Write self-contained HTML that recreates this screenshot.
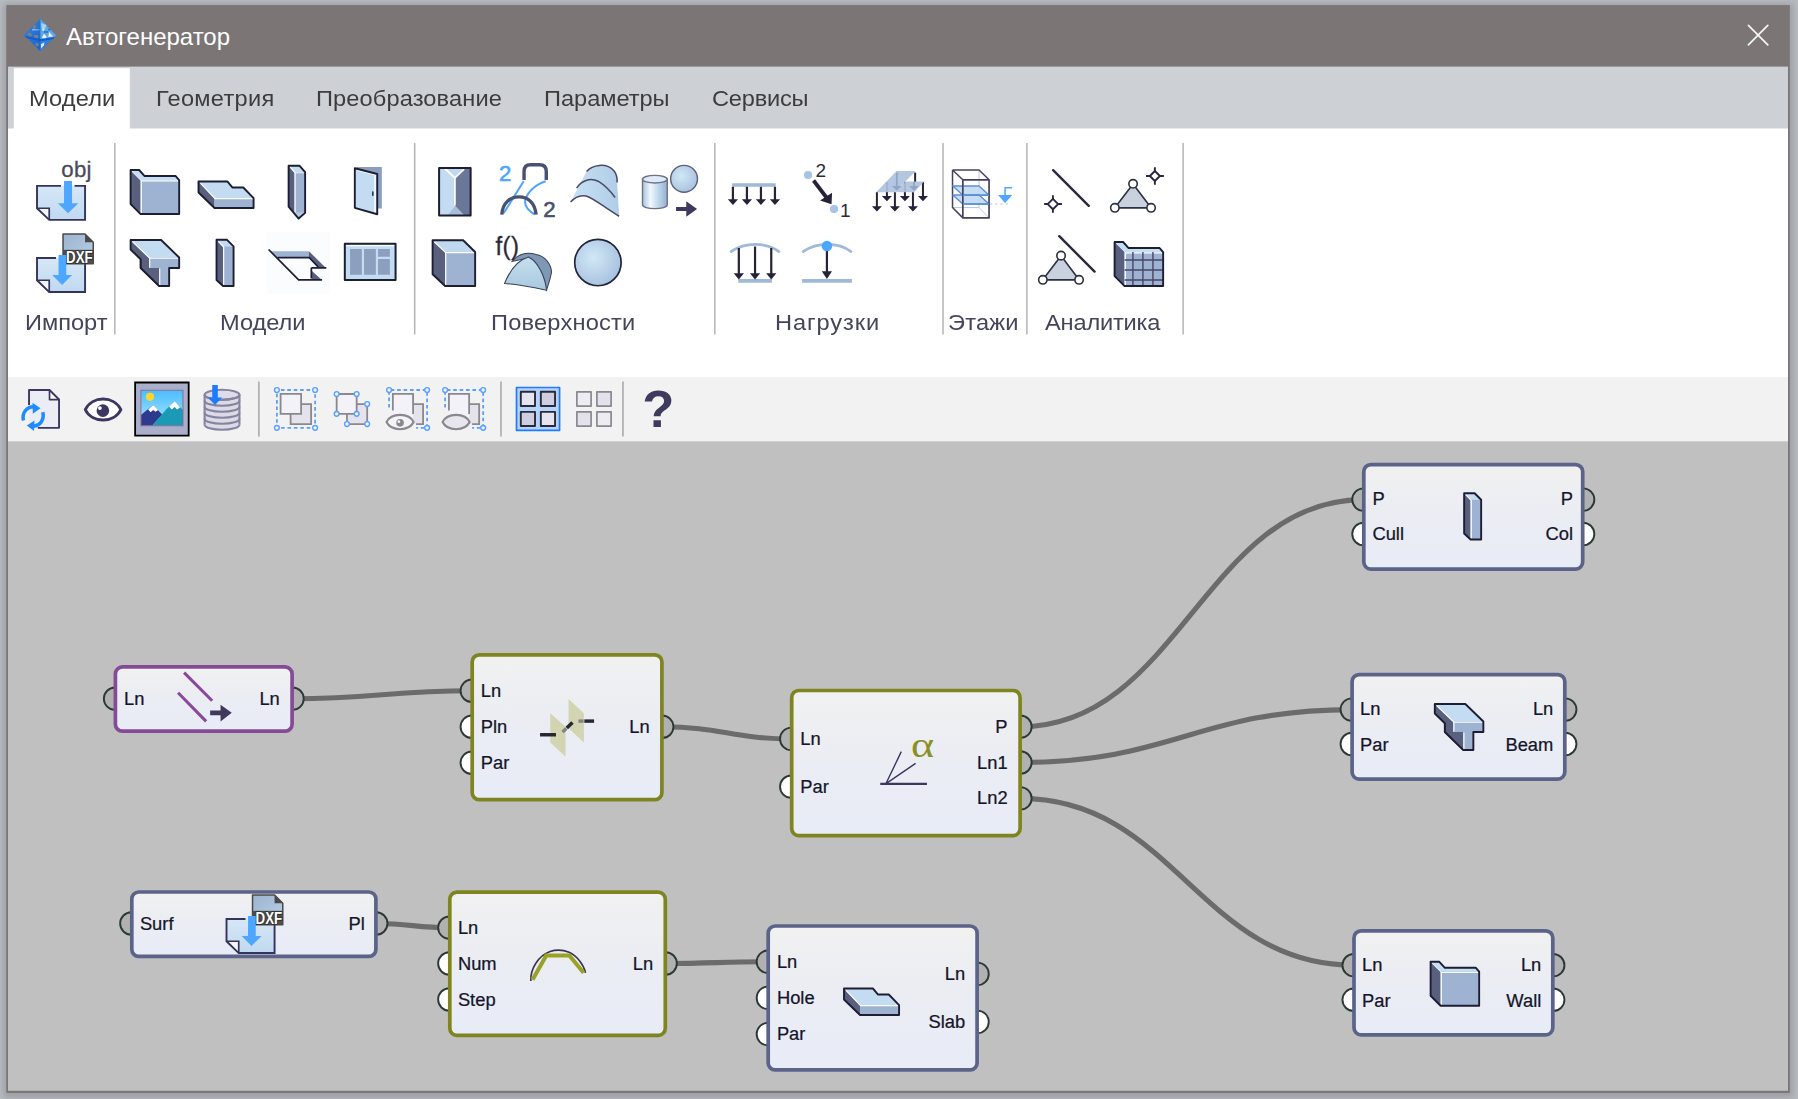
<!DOCTYPE html>
<html lang="ru">
<head>
<meta charset="utf-8">
<title>Автогенератор</title>
<style>
*{box-sizing:border-box;margin:0;padding:0}
html,body{width:1798px;height:1099px;overflow:hidden}
body{background:#b8bbc0;font-family:"Liberation Sans",sans-serif;position:relative}
.win,.title,.tabs,.ribbon,.toolbar,.canvas{position:absolute;left:0;top:0;width:1798px;height:1099px}
svg.ov{position:absolute;left:0;top:0;width:1798px;height:1099px;overflow:visible}
.t{position:absolute;white-space:nowrap;line-height:1}
.cap{font-size:24px;color:#fff}
.tab{font-size:22.5px;color:#3c3c3c;transform:scaleX(1.05);transform-origin:0 0}
.glabel{font-size:22.5px;color:#44445a;transform:scaleX(1.05);transform-origin:0 0}
.nl{font-size:18px;color:#1a1a2e}
</style>
</head>
<body>
<div class="win">
  <svg class="ov" viewBox="0 0 1798 1099">
  <defs>
    <filter id="sh" x="-2%" y="-2%" width="104%" height="104%"><feGaussianBlur stdDeviation="3"/></filter>
  </defs>
  <rect x="3.5" y="3.5" width="1789.5" height="1094" fill="#9b9ea4" filter="url(#sh)"/>
  <rect x="6.3" y="5.1" width="1783.5" height="1087.8" fill="#7b7575"/>
  <rect x="8" y="66.6" width="1780" height="63" fill="#cdd0d5"/>
  <rect x="8" y="128.5" width="1780" height="250" fill="#fff"/>
  <rect x="13.8" y="68.2" width="116" height="61" fill="#fff"/>
  <rect x="8" y="377" width="1780" height="65.5" fill="#f2f2f2"/>
  <rect x="8" y="441.3" width="1780" height="649.5" fill="#c0c0c0"/>
  <path d="M1748.4 25.4L1767.8 44.8M1767.8 25.4L1748.4 44.8" stroke="#f6f6f6" stroke-width="1.7" stroke-linecap="round" fill="none"/>
</svg>

  <div class="title">
    <svg class="ov" viewBox="0 0 1798 1099">
<defs><filter id="lb" x="-10%" y="-10%" width="120%" height="120%"><feGaussianBlur stdDeviation="0.55"/></filter>
<linearGradient id="lg1" x1="0" y1="0" x2="1" y2="1"><stop offset="0" stop-color="#3f86d8"/><stop offset="1" stop-color="#0f63d0"/></linearGradient></defs>
<g filter="url(#lb)"><g transform="translate(16 12) scale(0.04367)">
<path d="M560 160L920 530L555 892L190 520Z" fill="#2273d6"/>
<path d="M560 160L555 892L190 520Z" fill="url(#lg1)"/>
<path d="M560 160L920 530L860 590L560 640Z" fill="#5fa6e4"/>
<path d="M575 250L700 300L660 400L590 380Z" fill="#a9d3ea"/>
<path d="M600 380L650 390L640 430L600 425Z" fill="#e4efe6"/>
<path d="M640 500L700 560L690 610L590 600Z" fill="#eef2e6"/>
<path d="M760 450L850 560L740 570Z" fill="#e6efe2"/>
<path d="M640 440H730V475H640Z" fill="#1b6bd4"/>
<path d="M740 380L790 400L770 430L735 415Z" fill="#1b6bd4"/>
<path d="M560 640L860 590L800 650L556 892Z" fill="#2f7fdc"/>
<path d="M570 740L650 690L640 760L575 840Z" fill="#dfe3f6"/>
<path d="M200 545L560 620L880 575L860 620L560 672L250 600Z" fill="#0b60cf"/>
<path d="M370 390L540 400L540 420L370 425Z" fill="#8fbfe6"/>
<path d="M275 470L360 500L350 560L280 530Z" fill="#8a7d76"/>
<path d="M415 525L510 535L510 600L420 590Z" fill="#8a7d76"/>
<path d="M390 310L460 300L450 375L385 390Z" fill="#7a7f92"/>
<path d="M440 700L520 720L510 790L450 770Z" fill="#7a7f92"/>
</g></g>
</svg>

    <div class="t cap" style="left:66px;top:25px">Автогенератор</div>
  </div>
  <div class="tabs">
    <div class="t tab" style="left:28.7px;top:87.9px;letter-spacing:0.11px">Модели</div>
    <div class="t tab" style="left:155.9px;top:87.9px;letter-spacing:0.26px">Геометрия</div>
    <div class="t tab" style="left:315.9px;top:87.9px;letter-spacing:0.10px">Преобразование</div>
    <div class="t tab" style="left:543.7px;top:87.9px;letter-spacing:-0.04px">Параметры</div>
    <div class="t tab" style="left:711.5px;top:87.9px;letter-spacing:-0.21px">Сервисы</div>
  </div>
  <div class="ribbon">
    <div class="t glabel" style="left:24.6px;top:311.6px;letter-spacing:-0.01px">Импорт</div>
    <div class="t glabel" style="left:220.4px;top:311.6px;letter-spacing:-0.06px">Модели</div>
    <div class="t glabel" style="left:490.9px;top:311.6px;letter-spacing:0.19px">Поверхности</div>
    <div class="t glabel" style="left:775.0px;top:311.6px;letter-spacing:0.86px">Нагрузки</div>
    <div class="t glabel" style="left:947.6px;top:311.6px;letter-spacing:0.17px">Этажи</div>
    <div class="t glabel" style="left:1044.7px;top:311.6px;letter-spacing:-0.18px">Аналитика</div>
    <svg class="ov" viewBox="0 0 1798 1099" font-family="Liberation Sans, sans-serif">
<defs>
<linearGradient id="pg" x1="0" y1="0" x2="0" y2="1"><stop offset="0" stop-color="#d6e7f6"/><stop offset="1" stop-color="#c0d9f0"/></linearGradient>
<linearGradient id="shg" x1="0" y1="0" x2="1" y2="0"><stop offset="0" stop-color="#c8e2f3"/><stop offset="1" stop-color="#afcde7"/></linearGradient>
<linearGradient id="cyg" x1="0" y1="0" x2="1" y2="0"><stop offset="0" stop-color="#a9c4de"/><stop offset=".32" stop-color="#f2f8fd"/><stop offset=".6" stop-color="#c5dcf0"/><stop offset="1" stop-color="#94b0cf"/></linearGradient>
<radialGradient id="spg" cx=".4" cy=".4" r=".65"><stop offset="0" stop-color="#d0e8f6"/><stop offset="1" stop-color="#a7c1de"/></radialGradient>
<linearGradient id="dxg" x1="0" y1="0" x2="1" y2="1"><stop offset="0" stop-color="#9db4cf"/><stop offset="1" stop-color="#b9cfe6"/></linearGradient>
<linearGradient id="fng" x1="0" y1="0" x2="0" y2="1"><stop offset="0" stop-color="#c4dff0"/><stop offset="1" stop-color="#a9c8de"/></linearGradient>
</defs>
<g id="seps" stroke="#b4b4b4" stroke-width="1.5">
<path d="M114.8 143V334.5M414.7 143V334.5M714.8 143V334.5M943 143V334.5M1026.9 143V334.5M1183.1 143V334.5"/>
</g>
<g id="g-import"><g transform="translate(20 155) scale(0.1001)">
<path d="M170 308H650V648H292L170 532Z" fill="url(#pg)"/>
<path d="M170 532H292V648Z" fill="#f4f8fc"/>
<path d="M410 308H170V532L292 648H650V308H545" fill="none" stroke="#34345a" stroke-width="19" stroke-linejoin="miter"/>
<path d="M170 532H292V648" fill="none" stroke="#34345a" stroke-width="17"/>
<path d="M440 260H520V482H582L480 582L378 482H440Z" fill="#4da6ff"/>
<text x="412" y="215" font-size="222" letter-spacing="3" fill="#4a4a5c" stroke="#4a4a5c" stroke-width="3">obj</text>
</g>
<g transform="translate(20 228) scale(0.1001)">
<path d="M170 300H650V640H292L170 522Z" fill="url(#pg)"/>
<path d="M170 522H292V640Z" fill="#f4f8fc"/>
<path d="M360 300H170V522L292 640H650V360" fill="none" stroke="#34345a" stroke-width="19"/>
<path d="M170 522H292V640" fill="none" stroke="#34345a" stroke-width="17"/>
<path d="M430 60H650L732 142V355H430Z" fill="url(#dxg)"/>
<path d="M430 218H732V358H430Z" fill="#4f4f4f"/>
<path d="M650 60L732 142H650Z" fill="#4a4a4a"/>
<path d="M430 60H650L732 142V358H430Z" fill="none" stroke="#4a4a4a" stroke-width="15" stroke-linejoin="round"/>
<text x="460" y="349" font-size="162" font-weight="bold" fill="#fff" stroke="#333" stroke-width="22" stroke-linejoin="round" paint-order="stroke" textLength="266" lengthAdjust="spacingAndGlyphs">DXF</text>
<path d="M385 270H462V470H520L420 570L322 470H385Z" fill="#4da6ff"/>
</g>
</g>
<g id="g-models"><g transform="translate(20 155) scale(0.1001)">
<path d="M1105 150L1205 250V590L1105 490Z" fill="#58607e"/>
<path d="M1105 150H1190L1245 210H1555L1590 250H1205Z" fill="#c6def3"/>
<path d="M1205 250H1590V590H1205Z" fill="#9eb2d2"/>
<path d="M1212 585V258H1585" fill="none" stroke="#fff" stroke-width="11"/>
<path d="M1118 165L1210 256" fill="none" stroke="#fff" stroke-width="8" opacity=".9"/>
<path d="M1105 150H1190L1245 210H1555L1590 250V590H1205L1105 490Z" fill="none" stroke="#1d1d33" stroke-width="19" stroke-linejoin="round"/>
</g>
<g transform="translate(180 155) scale(0.1001)">
<path d="M185 265L345 430V530L185 375Z" fill="#58607e"/>
<path d="M185 265H475L525 325H632L735 430H345Z" fill="#c4dcf1"/>
<path d="M345 430H735V530H345Z" fill="#9eb2d2"/>
<path d="M205 283L350 436H728" fill="none" stroke="#fff" stroke-width="11"/>
<path d="M185 265H475L525 325H632L735 430V530H345L185 375Z" fill="none" stroke="#1d1d33" stroke-width="19" stroke-linejoin="round"/>
</g>
<g transform="translate(180 155) scale(0.1001)">
<path d="M1085 108L1145 172V575L1085 515Z" fill="#58607e"/>
<path d="M1085 108H1195L1250 172H1145Z" fill="#c4dcf1"/>
<path d="M1145 172H1250V578H1145Z" fill="#9eb2d2"/>
<path d="M1145 578H1250L1185 635Z" fill="#b5cce6"/>
<path d="M1100 122L1150 178V572" fill="none" stroke="#fff" stroke-width="11"/>
<path d="M1150 178H1245" fill="none" stroke="#fff" stroke-width="9" opacity=".8"/>
<path d="M1085 108H1195L1250 172V578L1185 635L1085 515Z" fill="none" stroke="#1d1d33" stroke-width="19" stroke-linejoin="round"/>
</g>
<g transform="translate(340 155) scale(0.1001)">
<path d="M165 120H418V535H165Z" fill="#8b9ec1"/>
<path d="M148 132L372 190V592L148 528Z" fill="#c4dcf1"/>
<path d="M172 150L350 196V580" fill="none" stroke="#fff" stroke-width="14"/>
<path d="M148 132L372 190V592L148 528Z" fill="none" stroke="#1d1d33" stroke-width="19" stroke-linejoin="round"/>
<ellipse cx="328" cy="386" rx="9" ry="26" fill="#34345a"/>
</g>
<g transform="translate(20 228) scale(0.1001)">
<path d="M1105 120L1290 295V400H1390V580L1205 400V312L1105 215Z" fill="#58607e"/>
<path d="M1105 120H1410L1590 295H1290Z" fill="#c4dcf1"/>
<path d="M1290 295H1590V400H1490V580H1390V400H1290Z" fill="#9eb2d2"/>
<path d="M1125 138L1296 302H1582M1296 302V395M1396 405V575" fill="none" stroke="#fff" stroke-width="11"/>
<path d="M1205 312V400L1390 580" fill="none" stroke="#1d1d33" stroke-width="14"/>
<path d="M1105 120H1410L1590 295V400H1490V580H1390L1205 400V312L1105 215Z" fill="none" stroke="#1d1d33" stroke-width="19" stroke-linejoin="round"/>
</g>
<g transform="translate(180 228) scale(0.1001)">
<path d="M365 118L430 183V580L365 520Z" fill="#58607e"/>
<path d="M365 118H470L535 183H430Z" fill="#c4dcf1"/>
<path d="M430 183H535V580H430Z" fill="#9eb2d2"/>
<path d="M382 134L436 190V574" fill="none" stroke="#fff" stroke-width="12"/>
<path d="M365 118H470L535 183V580H430L365 520Z" fill="none" stroke="#1d1d33" stroke-width="19" stroke-linejoin="round"/>
</g>
<g transform="translate(180 228) scale(0.1001)">
<path d="M865 40H1495V660H865Z" fill="#fbfcfe"/>
<path d="M905 232H1288V292H968Z" fill="#9eb2d2"/>
<path d="M1288 232L1458 400H1385L1288 300Z" fill="#58607e"/>
<path d="M1318 430L1415 518H1318Z" fill="#58607e"/>
<path d="M885 215L1185 518H1420M975 295H1290L1380 388M1312 398H1462M1312 398V505" fill="none" stroke="#1d1d33" stroke-width="17"/>
</g>
<g transform="translate(330 228) scale(0.1001)">
<path d="M148 158H655V520H148Z" fill="#c4dcf1"/>
<path d="M160 176H645" stroke="#fff" stroke-width="14" fill="none"/>
<path d="M200 210H318V468H200ZM340 210H458V468H340ZM480 210H598V288H480ZM480 310H598V468H480Z" fill="#8d9fbe"/>
<path d="M148 158H655V520H148Z" fill="none" stroke="#1d1d33" stroke-width="20" stroke-linejoin="round"/>
</g>
</g>
<g id="g-surfaces"><g transform="translate(340 155) scale(0.1001)">
<path d="M990 130H1060L1148 225V510L1070 605H990Z" fill="#c4dcf1"/>
<path d="M1060 130H1240L1148 225Z" fill="#c0d9f0"/>
<path d="M1240 130H1305V605H1240L1148 510V225Z" fill="#6b7799"/>
<path d="M1070 605L1148 510L1240 605Z" fill="#a9bddb"/>
<path d="M1050 138L1148 228L1240 142M1148 228V505" fill="none" stroke="#fff" stroke-width="17" stroke-linejoin="round"/>
<path d="M990 130H1305V605H990Z" fill="none" stroke="#1d1d33" stroke-width="20" stroke-linejoin="round"/>
</g>
<g transform="translate(480 155) scale(0.1001)">
<text x="190" y="258" font-size="222" fill="#4da6ff" stroke="#4da6ff" stroke-width="6">2</text>
<path d="M436 262L236 582M656 262C540 300 470 380 452 450C440 520 500 570 545 592" fill="none" stroke="#4da6ff" stroke-width="20"/>
<path d="M440 250V165Q440 98 505 98H595Q662 98 662 165V250" fill="none" stroke="#495071" stroke-width="34"/>
<path d="M218 595C225 480 300 418 390 418C480 418 550 480 560 595" fill="none" stroke="#495071" stroke-width="34"/>
<text x="632" y="615" font-size="222" fill="#495071" stroke="#495071" stroke-width="6">2</text>
</g>
<g transform="translate(480 155) scale(0.1001)">
<path d="M1065 165C1120 100 1260 70 1340 160C1370 200 1372 240 1370 275L1390 612C1250 530 1150 440 1060 410C990 395 940 430 905 470Z" fill="url(#shg)"/>
<path d="M1065 165C1120 100 1260 70 1340 160C1370 200 1372 240 1370 275" fill="none" stroke="#4a4a68" stroke-width="15"/>
<path d="M965 330C1010 260 1100 220 1180 262C1260 310 1310 370 1350 425" fill="none" stroke="#4a4a68" stroke-width="15"/>
<path d="M905 470C940 430 990 395 1060 410C1150 440 1250 530 1390 612" fill="none" stroke="#4a4a68" stroke-width="15"/>
</g>
<g transform="translate(620 155) scale(0.1001)">
<path d="M225 242V498A123 38 0 0 0 472 498V242Z" fill="url(#cyg)" stroke="#6d7088" stroke-width="14"/>
<ellipse cx="348" cy="242" rx="123" ry="38" fill="#dcebf7" stroke="#6d7088" stroke-width="14"/>
<circle cx="640" cy="238" r="134" fill="url(#spg)" stroke="#5b6078" stroke-width="14"/>
<path d="M560 520H662V462L770 540L662 618V560H560Z" fill="#3f3960"/>
</g>
<g transform="translate(330 228) scale(0.1001)">
<path d="M1025 122L1150 240V580L1025 462Z" fill="#58607e"/>
<path d="M1025 122H1330L1450 240H1150Z" fill="#c0d9f0"/>
<path d="M1150 240H1450V580H1150Z" fill="#9eb2d2"/>
<path d="M1042 138L1156 246H1444M1156 246V574" fill="none" stroke="#fff" stroke-width="12"/>
<path d="M1025 122H1330L1450 240V580H1150L1025 462Z" fill="none" stroke="#1d1d33" stroke-width="19" stroke-linejoin="round"/>
</g>
<g transform="translate(480 228) scale(0.1001)">
<path d="M320 335C380 260 470 235 560 265C650 280 710 360 715 440C700 520 680 570 665 622L480 300Z" fill="#7e98b5" stroke="#3a4156" stroke-width="10"/>
<path d="M245 555C300 420 380 320 485 290C580 340 650 480 665 622C520 590 380 560 245 555Z" fill="url(#fng)" stroke="#3a4156" stroke-width="11" stroke-linejoin="round"/>
<text transform="translate(155 266) scale(0.96 1.06)" font-size="250" fill="#2a2a3a" stroke="#2a2a3a" stroke-width="3" letter-spacing="4">f()</text>
</g>
<g transform="translate(480 228) scale(0.1001)">
<circle cx="1178" cy="345" r="232" fill="url(#spg)" stroke="#23233a" stroke-width="17"/>
</g>
</g>
<g id="g-loads"><g transform="translate(620 155) scale(0.1001)">
<path d="M1120 283H1555V318H1120Z" fill="#9fb9d9"/>
<g fill="#262238"><path d="M1117 318h22v124h40l-51 58l-51-58h40z"/><path d="M1257 318h22v124h40l-51 58l-51-58h40z"/><path d="M1397 318h22v124h40l-51 58l-51-58h40z"/><path d="M1537 318h22v124h40l-51 58l-51-58h40z"/></g>
</g>
<g transform="translate(780 155) scale(0.1001)">
<circle cx="280" cy="200" r="41" fill="#a9c3e2"/>
<circle cx="540" cy="540" r="41" fill="#a9c3e2"/>
<path d="M335 255L470 432" stroke="#262238" stroke-width="38" fill="none"/>
<path d="M400 455L520 378L515 492Z" fill="#262238"/>
<text x="355" y="215" font-size="190" fill="#2a2a3a">2</text>
<text x="600" y="615" font-size="190" fill="#2a2a3a">1</text>
</g>
<g transform="translate(780 155) scale(0.1001)">
<g fill="#262238"><path d="M1058 270h20v140h40l-50 52l-50-52h40z"/><path d="M1238 270h20v140h40l-50 52l-50-52h40z"/><path d="M1418 270h20v140h40l-50 52l-50-52h40z"/><path d="M1340 175h20v95h-20z"/></g>
<path d="M1165 160H1355L1150 372H960Z" fill="#aec2de" opacity=".93"/>
<path d="M1255 265H1440L1340 372H1152Z" fill="#aec2de" opacity=".93"/>
<g fill="#8fa6c6"><path d="M1158 175h18v135h40l-49 48l-49-48h40z"/><path d="M1330 270h18v40h40l-49 48l-49-48h40z"/></g>
<g fill="#262238"><path d="M958 372h20v140h40l-50 52l-50-52h40z"/><path d="M1138 372h20v140h40l-50 52l-50-52h40z"/><path d="M1318 372h20v140h40l-50 52l-50-52h40z"/></g>
</g>
<g transform="translate(710 228) scale(0.1001)">
<path d="M282 510H618V548H282Z" fill="#9fb9d9"/>
<path d="M212 235C350 140 560 140 688 235" fill="none" stroke="#9fb9d9" stroke-width="28" stroke-linecap="round"/>
<g fill="#262238"><path d="M277 200h22v252h40l-51 62l-51-62h40z"/><path d="M439 185h22v267h40l-51 62l-51-62h40z"/><path d="M601 200h22v252h40l-51 62l-51-62h40z"/></g>
</g>
<g transform="translate(710 228) scale(0.1001)">
<path d="M920 510H1418V548H920Z" fill="#9fb9d9"/>
<path d="M932 235C1070 140 1280 140 1408 235" fill="none" stroke="#9fb9d9" stroke-width="28" stroke-linecap="round"/>
<path d="M1157 200h22v232h40l-51 78l-51-78h40z" fill="#262238"/>
<circle cx="1168" cy="180" r="53" fill="#4da6ff"/>
</g>
</g>
<g id="g-floors"><g transform="translate(930 155) scale(0.1001)">
<path d="M490 150V525M225 525H490L590 628" fill="none" stroke="#a9c3e2" stroke-width="9"/>
<path d="M225 150H490L590 248M225 150L328 248M225 150V525L328 628" fill="none" stroke="#46415f" stroke-width="15" stroke-linejoin="round"/>
<path d="M228 310H490L590 402H328Z" fill="#bdd7f1" fill-opacity=".85" stroke="#5b90d9" stroke-width="14" stroke-linejoin="round"/>
<path d="M228 400H490L590 490H328Z" fill="#bdd7f1" fill-opacity=".85" stroke="#5b90d9" stroke-width="14" stroke-linejoin="round"/>
<path d="M328 248H590V628H328Z" fill="none" stroke="#46415f" stroke-width="17" stroke-linejoin="round"/>
<path d="M328 402H590M328 490H590" fill="none" stroke="#5b90d9" stroke-width="14"/>
<path d="M600 490H800" fill="none" stroke="#9cc4f0" stroke-width="10" stroke-dasharray="22 30"/>
<path d="M680 400H822L750 480Z" fill="#4da6ff"/>
<path d="M750 405V326H820" fill="none" stroke="#4da6ff" stroke-width="15"/>
</g>
</g>
<g id="g-analytics"><g transform="translate(930 155) scale(0.1001)">
<path d="M1230 152L1586 508" stroke="#2a2840" stroke-width="24" stroke-linecap="round" fill="none"/>
<path d="M1140 490H1318M1228 402V578" stroke="#2a2840" stroke-width="19" fill="none"/>
<path d="M1228 438L1280 490L1228 542L1176 490Z" fill="#fff" stroke="#2a2840" stroke-width="19" stroke-linejoin="round"/>
</g>
<g transform="translate(1080 155) scale(0.1001)">
<path d="M530 290L348 528H710Z" fill="#c9d1df" stroke="#2c3142" stroke-width="16" stroke-linejoin="round"/>
<g fill="#fff" stroke="#2c3142" stroke-width="16"><circle cx="530" cy="288" r="42"/><circle cx="348" cy="528" r="42"/><circle cx="710" cy="528" r="42"/></g>
<path d="M660 210H838M748 122V298" stroke="#2a2840" stroke-width="19" fill="none"/>
<path d="M748 160L798 210L748 260L698 210Z" fill="#fff" stroke="#2a2840" stroke-width="19" stroke-linejoin="round"/>
</g>
<g transform="translate(1020 228) scale(0.1001)">
<path d="M392 82L745 435" stroke="#2a2840" stroke-width="24" stroke-linecap="round" fill="none"/>
<path d="M410 278L228 518H590Z" fill="#c9d1df" stroke="#2c3142" stroke-width="16" stroke-linejoin="round"/>
<g fill="#fff" stroke="#2c3142" stroke-width="16"><circle cx="410" cy="276" r="42"/><circle cx="228" cy="518" r="42"/><circle cx="590" cy="518" r="42"/></g>
</g>
<g transform="translate(1020 228) scale(0.1001)">
<path d="M945 140L1045 240V580L945 480Z" fill="#58607e"/>
<path d="M945 140H1030L1085 200H1395L1430 240H1045Z" fill="#c6def3"/>
<path d="M1045 240H1430V580H1045Z" fill="#9eb2d2"/>
<path d="M1052 575V248H1425" fill="none" stroke="#fff" stroke-width="12"/>
<path d="M1128 240V580M1228 240V580M1328 240V580M1045 320H1430M1045 420H1430M1045 520H1430" fill="none" stroke="#4a4566" stroke-width="14"/>
<path d="M945 140H1030L1085 200H1395L1430 240V580H1045L945 480Z" fill="none" stroke="#1d1d33" stroke-width="19" stroke-linejoin="round"/>
</g>
</g>
</svg>

  </div>
  <div class="toolbar">
    <svg class="ov" viewBox="0 0 1798 1099" font-family="Liberation Sans, sans-serif">
<defs><linearGradient id="sky" x1="0" y1="0" x2="0" y2="1"><stop offset="0" stop-color="#49bcff"/><stop offset=".7" stop-color="#8fdcff"/><stop offset="1" stop-color="#b0e6ff"/></linearGradient></defs>
<g transform="translate(10 375) scale(0.1001)">
<!-- refresh document -->
<path d="M190 150H395L490 245V528H190Z" fill="#ececf5"/>
<path d="M395 150V245H490Z" fill="#fff"/>
<path d="M190 300V150H395L490 245V528H278" fill="none" stroke="#3c3760" stroke-width="19" stroke-linejoin="round"/>
<path d="M395 150V245H490" fill="none" stroke="#3c3760" stroke-width="17" stroke-linejoin="round"/>
<path d="M135 455C115 380 165 320 235 318" fill="none" stroke="#1e8cff" stroke-width="35"/>
<path d="M225 278L305 332L228 388Z" fill="#1e8cff"/>
<path d="M328 372C345 450 300 505 235 512" fill="none" stroke="#1e8cff" stroke-width="35"/>
<path d="M245 455L168 505L240 560Z" fill="#1e8cff"/>
<!-- eye -->
<path d="M752 345C820 205 1040 205 1108 345C1040 485 820 485 752 345Z" fill="#fff" stroke="#3c3760" stroke-width="29" stroke-linejoin="round"/>
<circle cx="928" cy="356" r="63" fill="#3c3760"/>
<circle cx="898" cy="330" r="19" fill="#fff"/>
<!-- image button (selected) -->
<path d="M1250 75H1785V605H1250Z" fill="#a9aeca" stroke="#000" stroke-width="18"/>
<path d="M1308 152H1728V508H1308Z" fill="url(#sky)"/>
<circle cx="1398" cy="218" r="41" fill="#ffd42a"/>
<path d="M1308 400L1430 300L1520 395L1420 508H1308Z" fill="#2e3a8c"/>
<path d="M1380 345L1430 300L1480 350L1455 368L1430 350L1405 372Z" fill="#fff"/>
<path d="M1420 508L1560 345L1645 262L1728 350V508Z" fill="#1b9ab6"/>
<path d="M1590 315L1645 262L1700 322L1670 345L1645 320L1615 345Z" fill="#fff"/>
<path d="M1308 152H1728V508H1308Z" fill="none" stroke="#8a6f92" stroke-width="10"/>
</g>

<g transform="translate(190 375) scale(0.1001)">
<!-- database -->
<path d="M146 198V497A174 50 0 0 0 494 497V198Z" fill="#dbdae6"/>
<g fill="none" stroke="#8583a0" stroke-width="21">
<ellipse cx="320" cy="198" rx="174" ry="50" fill="#dddce8"/>
<path d="M146 198V497M494 198V497"/>
<path d="M146 197A174 50 0 0 0 494 197M146 257A174 50 0 0 0 494 257M146 317A174 50 0 0 0 494 317M146 377A174 50 0 0 0 494 377M146 437A174 50 0 0 0 494 437M146 497A174 50 0 0 0 494 497"/>
</g>
<path d="M222 100H278V225H322L250 300L178 225H222Z" fill="#1e7bff"/>
<path d="M688 65V615" stroke="#b2b2b2" stroke-width="18" fill="none"/>
<!-- select dashed -->
<path d="M1005 290H1210V490H1005Z" fill="#e4e3ec" stroke="#8a888e" stroke-width="18"/>
<path d="M905 188H1110V388H905Z" fill="#f3f2f8" stroke="#8a888e" stroke-width="18"/>
<path d="M868 150H1250V528H868Z" fill="none" stroke="#5aa0ff" stroke-width="18" stroke-dasharray="36 28" stroke-dashoffset="-40"/>
<g fill="#f2f2f2" stroke="#5aa0ff" stroke-width="14"><circle cx="868" cy="150" r="24"/><circle cx="1250" cy="150" r="24"/><circle cx="868" cy="528" r="24"/><circle cx="1250" cy="528" r="24"/></g>
<!-- handles squares -->
<path d="M1568 290H1770V490H1568Z" fill="#e4e3ec" stroke="#8a888e" stroke-width="18"/>
<path d="M1465 190H1665V388H1465Z" fill="#f3f2f8" stroke="#8a888e" stroke-width="18"/>
<g fill="#f2f2f2" stroke="#5aa0ff" stroke-width="14"><circle cx="1465" cy="190" r="24"/><circle cx="1665" cy="190" r="24"/><circle cx="1465" cy="388" r="24"/><circle cx="1665" cy="388" r="24"/><circle cx="1770" cy="290" r="24"/><circle cx="1568" cy="490" r="24"/><circle cx="1770" cy="490" r="24"/></g>
</g>

<g transform="translate(330 375) scale(0.1001)">
<!-- select + eye -->
<path d="M830 290H930V490H830Z" fill="#e4e3ec"/>
<path d="M628 188H830V388H628Z" fill="#f3f2f8"/>
<path d="M628 355V188H830V390M830 290H930V490H860" fill="none" stroke="#8a888e" stroke-width="18"/>
<path d="M590 335V150H970V528H860" fill="none" stroke="#5aa0ff" stroke-width="18" stroke-dasharray="36 28" stroke-dashoffset="-10"/>
<g fill="#f2f2f2" stroke="#5aa0ff" stroke-width="14"><circle cx="590" cy="150" r="24"/><circle cx="970" cy="150" r="24"/><circle cx="970" cy="528" r="24"/></g>
<path d="M565 470C610 375 790 375 835 470C790 565 610 565 565 470Z" fill="#f4f4f7" stroke="#8a888e" stroke-width="21" stroke-linejoin="round"/>
<circle cx="700" cy="478" r="38" fill="#8a888e"/>
<circle cx="688" cy="466" r="14" fill="#f4f4f7"/>
<!-- select + ellipse -->
<path d="M1390 290H1490V490H1390Z" fill="#e4e3ec"/>
<path d="M1188 188H1390V388H1188Z" fill="#f3f2f8"/>
<path d="M1188 355V188H1390V390M1390 290H1490V490H1420" fill="none" stroke="#8a888e" stroke-width="18"/>
<path d="M1150 335V150H1530V528H1420" fill="none" stroke="#5aa0ff" stroke-width="18" stroke-dasharray="36 28" stroke-dashoffset="-10"/>
<g fill="#f2f2f2" stroke="#5aa0ff" stroke-width="14"><circle cx="1150" cy="150" r="24"/><circle cx="1530" cy="150" r="24"/><circle cx="1530" cy="528" r="24"/></g>
<path d="M1125 470C1170 375 1350 375 1395 470C1350 565 1170 565 1125 470Z" fill="#e7e6ef" stroke="#8a888e" stroke-width="21" stroke-linejoin="round"/>
<path d="M1708 65V615" stroke="#b2b2b2" stroke-width="18" fill="none"/>
</g>

<g transform="translate(500 375) scale(0.1001)">
<path d="M165 125H595V553H165Z" fill="#b5d3ff" stroke="#1e7bff" stroke-width="17" stroke-linejoin="round"/>
<g stroke="#2b2b35" stroke-width="19" stroke-linejoin="round"><path d="M208 168H350V310H208Z" fill="#e6e4f0"/><path d="M408 168H550V310H408Z" fill="#cfcde0"/><path d="M208 368H350V510H208Z" fill="#cfcde0"/><path d="M408 368H550V510H408Z" fill="#e6e4f0"/></g>
<g stroke="#8a888e" stroke-width="17" stroke-linejoin="round"><path d="M768 168H910V310H768Z" fill="#ececf3"/><path d="M968 168H1110V310H968Z" fill="#e2e1ec"/><path d="M768 368H910V510H768Z" fill="#e2e1ec"/><path d="M968 368H1110V510H968Z" fill="#ececf3"/></g>
<path d="M1228 65V615" stroke="#b2b2b2" stroke-width="18" fill="none"/>
<text x="1420" y="518" font-size="525" font-weight="bold" fill="#3f3b5f">?</text>
</g>

</svg>

  </div>
  <div class="canvas">
    <svg class="ov" viewBox="0 0 1798 1099" font-family="Liberation Sans, sans-serif">
<defs><linearGradient id="ng" x1="0" y1="0" x2="0" y2="1"><stop offset="0" stop-color="#f1f1f1"/><stop offset="0.45" stop-color="#ebedf3"/><stop offset="1" stop-color="#e8ecf7"/></linearGradient></defs>
<g id="wires" fill="none" stroke="#6b6b6b" stroke-width="5.1" stroke-linecap="butt">
<path d="M292.4 698.7 C375.0 698.7 389.3 690.8 471.9 690.8"/>
<path d="M662.1 726.8 C721.6 726.8 731.9 738.9 791.4 738.9"/>
<path d="M1020.3 726.7 C1178.2 726.7 1205.7 499.6 1363.6 499.6"/>
<path d="M1020.3 762.5 C1172.8 762.5 1199.4 709.6 1351.9 709.6"/>
<path d="M1020.3 798.4 C1173.7 798.4 1200.4 965.2 1353.8 965.2"/>
<path d="M376.1 923.5 C409.9 923.5 415.7 927.7 449.5 927.7"/>
<path d="M665.5 963.5 C712.6 963.5 720.9 961.8 768.0 961.8"/>
</g>
<g id="n1">
<circle cx="115.1" cy="698.7" r="11.25" fill="#b1b1b1" stroke="#2c3838" stroke-width="1.9"/>
<circle cx="292.5" cy="698.7" r="11.25" fill="#b1b1b1" stroke="#2c3838" stroke-width="1.9"/>
<rect x="115.4" y="666.9" width="176.7" height="64.3" rx="7" fill="url(#ng)" stroke="#864b97" stroke-width="3.7"/>
<g font-size="19" fill="#15152a" stroke="#15152a" stroke-width="0.25">
<text transform="translate(124.0 704.7) scale(0.965 1)">Ln</text>
<text transform="translate(279.8 704.7) scale(0.965 1)" text-anchor="end">Ln</text>
</g>
<g transform="translate(90 650) scale(0.13348)">
<path d="M705 170L915 380M660 320L870 535" fill="none" stroke="#8a4a9c" stroke-width="23"/>
<path d="M900 454H978V410L1062 470L978 535V488H900Z" fill="#40395c"/>
</g>

</g>
<g id="n2">
<circle cx="471.8" cy="690.8" r="11.25" fill="#b1b1b1" stroke="#2c3838" stroke-width="1.9"/>
<circle cx="471.8" cy="726.8" r="11.25" fill="#ffffff" stroke="#2c3838" stroke-width="1.9"/>
<circle cx="471.8" cy="762.8" r="11.25" fill="#ffffff" stroke="#2c3838" stroke-width="1.9"/>
<circle cx="662.2" cy="726.8" r="11.25" fill="#b1b1b1" stroke="#2c3838" stroke-width="1.9"/>
<rect x="472.2" y="654.8" width="189.7" height="144.9" rx="7" fill="url(#ng)" stroke="#7d8420" stroke-width="3.7"/>
<g font-size="19" fill="#15152a" stroke="#15152a" stroke-width="0.25">
<text transform="translate(480.8 696.8) scale(0.965 1)">Ln</text>
<text transform="translate(480.8 732.8) scale(0.965 1)">Pln</text>
<text transform="translate(480.8 768.8) scale(0.965 1)">Par</text>
<text transform="translate(649.6 732.8) scale(0.965 1)" text-anchor="end">Ln</text>
</g>
<g transform="translate(450 645) scale(0.15009)">
<path d="M668 455L770 545V745L668 650Z" fill="#d2d4b2"/>
<path d="M790 360L892 455V650L790 555Z" fill="#d2d4b2"/>
<g fill="none" stroke-width="23" stroke-linecap="butt">
<path d="M600 598H706" stroke="#26262f"/>
<path d="M750 580L775 556" stroke="#85857f"/>
<path d="M778 553L816 516" stroke="#26262f"/>
<path d="M856 507H890" stroke="#85857f"/>
<path d="M895 507H960" stroke="#26262f"/>
</g>
</g>

</g>
<g id="n3">
<circle cx="791.3" cy="738.9" r="11.25" fill="#b1b1b1" stroke="#2c3838" stroke-width="1.9"/>
<circle cx="791.3" cy="786.7" r="11.25" fill="#ffffff" stroke="#2c3838" stroke-width="1.9"/>
<circle cx="1020.4" cy="726.7" r="11.25" fill="#b1b1b1" stroke="#2c3838" stroke-width="1.9"/>
<circle cx="1020.4" cy="762.5" r="11.25" fill="#b1b1b1" stroke="#2c3838" stroke-width="1.9"/>
<circle cx="1020.4" cy="798.4" r="11.25" fill="#b1b1b1" stroke="#2c3838" stroke-width="1.9"/>
<rect x="791.7" y="690.5" width="228.4" height="145.1" rx="7" fill="url(#ng)" stroke="#7d8420" stroke-width="3.7"/>
<g font-size="19" fill="#15152a" stroke="#15152a" stroke-width="0.25">
<text transform="translate(800.3 744.9) scale(0.965 1)">Ln</text>
<text transform="translate(800.3 792.7) scale(0.965 1)">Par</text>
<text transform="translate(1007.6 732.7) scale(0.965 1)" text-anchor="end">P</text>
<text transform="translate(1007.6 768.5) scale(0.965 1)" text-anchor="end">Ln1</text>
<text transform="translate(1007.6 804.4) scale(0.965 1)" text-anchor="end">Ln2</text>
</g>
<g transform="translate(770 680) scale(0.15573)">
<path d="M745 665L843 460M745 665L935 535" fill="none" stroke="#3d3560" stroke-width="9"/>
<path d="M708 667H1008" fill="none" stroke="#3d3560" stroke-width="14"/>
<text transform="translate(905 492) scale(1.22 1)" font-family="Liberation Serif, serif" font-size="232" fill="#8a9028">α</text>
</g>

</g>
<g id="n4">
<circle cx="1363.5" cy="499.6" r="11.25" fill="#b1b1b1" stroke="#2c3838" stroke-width="1.9"/>
<circle cx="1363.5" cy="534.0" r="11.25" fill="#ffffff" stroke="#2c3838" stroke-width="1.9"/>
<circle cx="1583.1" cy="499.6" r="11.25" fill="#b1b1b1" stroke="#2c3838" stroke-width="1.9"/>
<circle cx="1583.1" cy="534.0" r="11.25" fill="#ffffff" stroke="#2c3838" stroke-width="1.9"/>
<rect x="1363.8" y="464.6" width="218.9" height="104.5" rx="7" fill="url(#ng)" stroke="#5b6389" stroke-width="3.7"/>
<g font-size="19" fill="#15152a" stroke="#15152a" stroke-width="0.25">
<text transform="translate(1372.4 504.6) scale(0.965 1)">P</text>
<text transform="translate(1372.4 540.4) scale(0.965 1)">Cull</text>
<text transform="translate(1573.1 504.6) scale(0.965 1)" text-anchor="end">P</text>
<text transform="translate(1573.1 540.4) scale(0.965 1)" text-anchor="end">Col</text>
</g>
<g transform="translate(1247.6 253.4)"><g transform="translate(180 228) scale(0.1001)">
<path d="M365 118L430 183V580L365 520Z" fill="#58607e"/>
<path d="M365 118H470L535 183H430Z" fill="#c4dcf1"/>
<path d="M430 183H535V580H430Z" fill="#9eb2d2"/>
<path d="M382 134L436 190V574" fill="none" stroke="#fff" stroke-width="12"/>
<path d="M365 118H470L535 183V580H430L365 520Z" fill="none" stroke="#1d1d33" stroke-width="19" stroke-linejoin="round"/>
</g>
</g>

</g>
<g id="n5">
<circle cx="1351.8" cy="709.6" r="11.25" fill="#b1b1b1" stroke="#2c3838" stroke-width="1.9"/>
<circle cx="1351.8" cy="744.0" r="11.25" fill="#ffffff" stroke="#2c3838" stroke-width="1.9"/>
<circle cx="1565.2" cy="709.6" r="11.25" fill="#b1b1b1" stroke="#2c3838" stroke-width="1.9"/>
<circle cx="1565.2" cy="744.0" r="11.25" fill="#ffffff" stroke="#2c3838" stroke-width="1.9"/>
<rect x="1352.1" y="674.6" width="212.7" height="104.5" rx="7" fill="url(#ng)" stroke="#5b6389" stroke-width="3.7"/>
<g font-size="19" fill="#15152a" stroke="#15152a" stroke-width="0.25">
<text transform="translate(1360.1 715.2) scale(0.965 1)">Ln</text>
<text transform="translate(1360.1 751.2) scale(0.965 1)">Par</text>
<text transform="translate(1553.3 715.2) scale(0.965 1)" text-anchor="end">Ln</text>
<text transform="translate(1553.3 751.2) scale(0.965 1)" text-anchor="end">Beam</text>
</g>
<g transform="translate(1304.2 464)"><g transform="translate(20 228) scale(0.1001)">
<path d="M1105 120L1290 295V400H1390V580L1205 400V312L1105 215Z" fill="#58607e"/>
<path d="M1105 120H1410L1590 295H1290Z" fill="#c4dcf1"/>
<path d="M1290 295H1590V400H1490V580H1390V400H1290Z" fill="#9eb2d2"/>
<path d="M1125 138L1296 302H1582M1296 302V395M1396 405V575" fill="none" stroke="#fff" stroke-width="11"/>
<path d="M1205 312V400L1390 580" fill="none" stroke="#1d1d33" stroke-width="14"/>
<path d="M1105 120H1410L1590 295V400H1490V580H1390L1205 400V312L1105 215Z" fill="none" stroke="#1d1d33" stroke-width="19" stroke-linejoin="round"/>
</g>
</g>

</g>
<g id="n6">
<circle cx="1353.7" cy="965.2" r="11.25" fill="#b1b1b1" stroke="#2c3838" stroke-width="1.9"/>
<circle cx="1353.7" cy="999.8" r="11.25" fill="#ffffff" stroke="#2c3838" stroke-width="1.9"/>
<circle cx="1553.2" cy="965.2" r="11.25" fill="#b1b1b1" stroke="#2c3838" stroke-width="1.9"/>
<circle cx="1553.2" cy="999.8" r="11.25" fill="#ffffff" stroke="#2c3838" stroke-width="1.9"/>
<rect x="1354.0" y="930.8" width="198.8" height="104.0" rx="7" fill="url(#ng)" stroke="#5b6389" stroke-width="3.7"/>
<g font-size="19" fill="#15152a" stroke="#15152a" stroke-width="0.25">
<text transform="translate(1362.0 970.9) scale(0.965 1)">Ln</text>
<text transform="translate(1362.0 1006.8) scale(0.965 1)">Par</text>
<text transform="translate(1541.3 970.9) scale(0.965 1)" text-anchor="end">Ln</text>
<text transform="translate(1541.3 1006.8) scale(0.965 1)" text-anchor="end">Wall</text>
</g>
<g transform="translate(1300 791.7)"><g transform="translate(20 155) scale(0.1001)">
<path d="M1105 150L1205 250V590L1105 490Z" fill="#58607e"/>
<path d="M1105 150H1190L1245 210H1555L1590 250H1205Z" fill="#c6def3"/>
<path d="M1205 250H1590V590H1205Z" fill="#9eb2d2"/>
<path d="M1212 585V258H1585" fill="none" stroke="#fff" stroke-width="11"/>
<path d="M1118 165L1210 256" fill="none" stroke="#fff" stroke-width="8" opacity=".9"/>
<path d="M1105 150H1190L1245 210H1555L1590 250V590H1205L1105 490Z" fill="none" stroke="#1d1d33" stroke-width="19" stroke-linejoin="round"/>
</g>
</g>

</g>
<g id="n7">
<circle cx="131.4" cy="923.5" r="11.25" fill="#b1b1b1" stroke="#2c3838" stroke-width="1.9"/>
<circle cx="376.2" cy="923.5" r="11.25" fill="#b1b1b1" stroke="#2c3838" stroke-width="1.9"/>
<rect x="131.8" y="892.0" width="244.1" height="64.4" rx="7" fill="url(#ng)" stroke="#5b6389" stroke-width="3.7"/>
<g font-size="19" fill="#15152a" stroke="#15152a" stroke-width="0.25">
<text transform="translate(139.9 929.5) scale(0.965 1)">Surf</text>
<text transform="translate(364.8 929.5) scale(0.965 1)" text-anchor="end">Pl</text>
</g>
<g transform="translate(189.5 661)"><g transform="translate(20 228) scale(0.1001)">
<path d="M170 300H650V640H292L170 522Z" fill="url(#pg)"/>
<path d="M170 522H292V640Z" fill="#f4f8fc"/>
<path d="M360 300H170V522L292 640H650V360" fill="none" stroke="#34345a" stroke-width="19"/>
<path d="M170 522H292V640" fill="none" stroke="#34345a" stroke-width="17"/>
<path d="M430 60H650L732 142V355H430Z" fill="url(#dxg)"/>
<path d="M430 218H732V358H430Z" fill="#4f4f4f"/>
<path d="M650 60L732 142H650Z" fill="#4a4a4a"/>
<path d="M430 60H650L732 142V358H430Z" fill="none" stroke="#4a4a4a" stroke-width="15" stroke-linejoin="round"/>
<text x="460" y="349" font-size="162" font-weight="bold" fill="#fff" stroke="#333" stroke-width="22" stroke-linejoin="round" paint-order="stroke" textLength="266" lengthAdjust="spacingAndGlyphs">DXF</text>
<path d="M385 270H462V470H520L420 570L322 470H385Z" fill="#4da6ff"/>
</g>
</g>

</g>
<g id="n8">
<circle cx="449.4" cy="927.7" r="11.25" fill="#b1b1b1" stroke="#2c3838" stroke-width="1.9"/>
<circle cx="449.4" cy="963.5" r="11.25" fill="#ffffff" stroke="#2c3838" stroke-width="1.9"/>
<circle cx="449.4" cy="999.5" r="11.25" fill="#ffffff" stroke="#2c3838" stroke-width="1.9"/>
<circle cx="665.6" cy="963.5" r="11.25" fill="#b1b1b1" stroke="#2c3838" stroke-width="1.9"/>
<rect x="449.8" y="892.2" width="215.5" height="143.1" rx="7" fill="url(#ng)" stroke="#7d8420" stroke-width="3.7"/>
<g font-size="19" fill="#15152a" stroke="#15152a" stroke-width="0.25">
<text transform="translate(457.9 933.7) scale(0.965 1)">Ln</text>
<text transform="translate(457.9 969.5) scale(0.965 1)">Num</text>
<text transform="translate(457.9 1005.5) scale(0.965 1)">Step</text>
<text transform="translate(653.1 969.5) scale(0.965 1)" text-anchor="end">Ln</text>
</g>
<g transform="translate(480 925) scale(0.1001)">
<path d="M508 560C500 440 585 305 700 265C760 245 830 248 890 272C965 305 1038 395 1054 478" fill="none" stroke="#3a3350" stroke-width="16"/>
<path d="M525 548L662 305H893L1035 478" fill="none" stroke="#9aa225" stroke-width="40" stroke-linejoin="miter"/>
</g>

</g>
<g id="n9">
<circle cx="767.9" cy="961.8" r="11.25" fill="#b1b1b1" stroke="#2c3838" stroke-width="1.9"/>
<circle cx="767.9" cy="997.9" r="11.25" fill="#ffffff" stroke="#2c3838" stroke-width="1.9"/>
<circle cx="767.9" cy="1034.1" r="11.25" fill="#ffffff" stroke="#2c3838" stroke-width="1.9"/>
<circle cx="977.5" cy="973.9" r="11.25" fill="#b1b1b1" stroke="#2c3838" stroke-width="1.9"/>
<circle cx="977.5" cy="1021.9" r="11.25" fill="#ffffff" stroke="#2c3838" stroke-width="1.9"/>
<rect x="768.2" y="926.0" width="208.9" height="143.9" rx="7" fill="url(#ng)" stroke="#5b6389" stroke-width="3.7"/>
<g font-size="19" fill="#15152a" stroke="#15152a" stroke-width="0.25">
<text transform="translate(776.9 967.8) scale(0.965 1)">Ln</text>
<text transform="translate(776.9 1003.9) scale(0.965 1)">Hole</text>
<text transform="translate(776.9 1040.1) scale(0.965 1)">Par</text>
<text transform="translate(965.2 979.9) scale(0.965 1)" text-anchor="end">Ln</text>
<text transform="translate(965.2 1027.9) scale(0.965 1)" text-anchor="end">Slab</text>
</g>
<g transform="translate(645.5 807)"><g transform="translate(180 155) scale(0.1001)">
<path d="M185 265L345 430V530L185 375Z" fill="#58607e"/>
<path d="M185 265H475L525 325H632L735 430H345Z" fill="#c4dcf1"/>
<path d="M345 430H735V530H345Z" fill="#9eb2d2"/>
<path d="M205 283L350 436H728" fill="none" stroke="#fff" stroke-width="11"/>
<path d="M185 265H475L525 325H632L735 430V530H345L185 375Z" fill="none" stroke="#1d1d33" stroke-width="19" stroke-linejoin="round"/>
</g>
</g>

</g>
</svg>
  </div>
</div>
</body>
</html>
